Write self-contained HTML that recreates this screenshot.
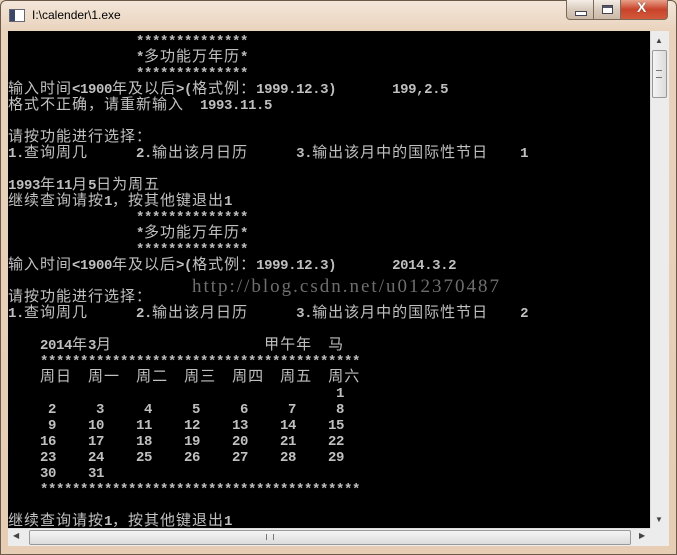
<!DOCTYPE html>
<html><head><meta charset="utf-8"><style>
*{margin:0;padding:0}
body{width:677px;height:555px;overflow:hidden;background:#e9d2bb;position:relative;font-family:"Liberation Sans",sans-serif}
.frame{position:absolute;left:0;top:0;width:675px;height:553px;border:1px solid #6b5a4a;border-radius:6px 6px 0 0;background:linear-gradient(180deg,#f3e6d9 0,#e9d3bd 30px,#e6cdb3 100%)}
.title{position:absolute;left:32px;top:8px;font-size:12px;color:#000}
.ico{position:absolute;left:9px;top:9px;width:14px;height:11px;background:#fff;border:1px solid #667}
.ico:before{content:"";position:absolute;left:0;top:0;width:5px;height:11px;background:#3a4a66}
.btn{position:absolute;top:0;height:19px;border:1px solid #7a6a5a;border-top:none;background:linear-gradient(#f4ede6,#d9cbbd 50%,#cbb9a8)}
.b1{left:566px;width:26px;border-radius:0 0 0 4px}
.b2{left:593px;width:26px}
.b3{left:620px;width:46px;border-radius:0 0 4px 0;background:linear-gradient(#e8a08a,#c8432a 50%,#d45a3c)}
.con{position:absolute;left:8px;top:31px;width:642px;height:497px;background:#000;overflow:hidden}
.con div{height:16px;line-height:16px;font-family:"Liberation Mono",monospace;font-size:14px;letter-spacing:-0.4px;color:#c0c0c0;font-weight:bold;white-space:pre;overflow:visible;position:relative;top:3px}
.c{font-family:"Noto Sans CJK SC",sans-serif;font-weight:normal;letter-spacing:1px;font-size:15px;line-height:0}
.wm{position:absolute;left:192px;top:276px;font-family:"Liberation Serif",serif;font-size:19px;letter-spacing:2px;color:#8a8a8a;opacity:.8;white-space:nowrap}
.vs{position:absolute;left:650px;top:31px;width:18px;height:497px;background:#ececec;border-left:1px solid #ddd}
.th{position:absolute;left:652px;top:50px;width:13px;height:46px;border:1px solid #999;border-radius:2px;background:linear-gradient(90deg,#f4f4f4,#dcdcdc)}
.hs{position:absolute;left:8px;top:528px;width:642px;height:17px;background:#ececec;border-top:1px solid #ddd}
.hth{position:absolute;left:29px;top:530px;width:600px;height:13px;border:1px solid #999;border-radius:2px;background:linear-gradient(#f4f4f4,#dcdcdc)}
.corner{position:absolute;left:650px;top:528px;width:19px;height:18px;background:#ececec}
.ar{position:absolute;font-size:8px;color:#444}
</style></head><body>
<div class="frame"></div>
<div class="ico"></div>
<div class="title">I:\calender\1.exe</div>
<div class="btn b1"><div style="position:absolute;left:8px;top:11px;width:10px;height:3px;background:#fff;border:1px solid #445"></div></div>
<div class="btn b2"><div style="position:absolute;left:8px;top:5px;width:9px;height:7px;border:1px solid #445;background:#fff;box-shadow:inset 0 2px #556"></div></div>
<div class="btn b3"><div style="position:absolute;left:16px;top:-1px;color:#fff;font-weight:bold;font-size:14px;text-shadow:0 0 1px #333">X</div></div>
<div class="con">
<div>                **************</div>
<div>                *<span class="c">多功能万年历</span>*</div>
<div>                **************</div>
<div><span class="c">输入时间</span>&lt;1900<span class="c">年及以后</span>&gt;(<span class="c">格式例：</span>1999.12.3)       199,2.5</div>
<div><span class="c">格式不正确，请重新输入</span>  1993.11.5</div>
<div> </div>
<div><span class="c">请按功能进行选择：</span></div>
<div>1.<span class="c">查询周几</span>      2.<span class="c">输出该月日历</span>      3.<span class="c">输出该月中的国际性节日</span>    1</div>
<div> </div>
<div>1993<span class="c">年</span>11<span class="c">月</span>5<span class="c">日为周五</span></div>
<div><span class="c">继续查询请按</span>1<span class="c">，按其他键退出</span>1</div>
<div>                **************</div>
<div>                *<span class="c">多功能万年历</span>*</div>
<div>                **************</div>
<div><span class="c">输入时间</span>&lt;1900<span class="c">年及以后</span>&gt;(<span class="c">格式例：</span>1999.12.3)       2014.3.2</div>
<div> </div>
<div><span class="c">请按功能进行选择：</span></div>
<div>1.<span class="c">查询周几</span>      2.<span class="c">输出该月日历</span>      3.<span class="c">输出该月中的国际性节日</span>    2</div>
<div> </div>
<div>    2014<span class="c">年</span>3<span class="c">月</span>                   <span class="c">甲午年</span>  <span class="c">马</span></div>
<div>    ****************************************</div>
<div>    <span class="c">周日</span>  <span class="c">周一</span>  <span class="c">周二</span>  <span class="c">周三</span>  <span class="c">周四</span>  <span class="c">周五</span>  <span class="c">周六</span></div>
<div>                                         1</div>
<div>     2     3     4     5     6     7     8</div>
<div>     9    10    11    12    13    14    15</div>
<div>    16    17    18    19    20    21    22</div>
<div>    23    24    25    26    27    28    29</div>
<div>    30    31</div>
<div>    ****************************************</div>
<div> </div>
<div><span class="c">继续查询请按</span>1<span class="c">，按其他键退出</span>1</div>
</div>
<div class="wm">http://blog.csdn.net/u012370487</div>
<div class="vs"></div><div class="th"><div style="position:absolute;left:3px;top:19px;width:6px;height:6px;border-top:1px solid #777;border-bottom:1px solid #777"></div></div>
<div class="ar" style="left:655px;top:36px">▲</div>
<div class="ar" style="left:655px;top:515px">▼</div>
<div class="hs"></div><div class="hth"><div style="position:absolute;left:236px;top:3px;width:6px;height:6px;border-left:1px solid #777;border-right:1px solid #777"></div></div>
<div class="ar" style="left:13px;top:531px">◀</div>
<div class="ar" style="left:639px;top:531px">▶</div>
<div class="corner"></div>
</body></html>
